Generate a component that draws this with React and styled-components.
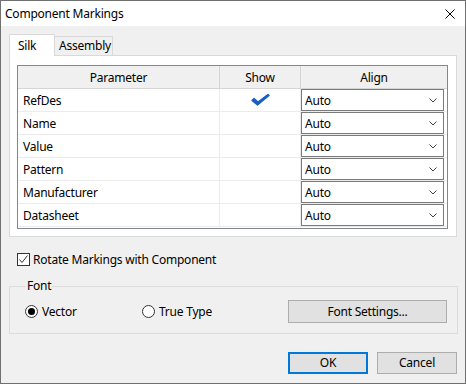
import React from "react";
import styled, { createGlobalStyle } from "styled-components";

const Global = createGlobalStyle`
  html, body { margin: 0; padding: 0; background: #f0f0f0; }
  body { font-family: "Noto Sans", "Liberation Sans", sans-serif; font-size: 12px; letter-spacing: -0.22px; color: #000; }
  * { box-sizing: border-box; }
`;

const Window = styled.div`
  width: 466px;
  height: 384px;
  border: 1px solid #707070;
  background: #f0f0f0;
  display: flex;
  flex-direction: column;
`;

const TitleBar = styled.div`
  height: 25px;
  background: #fff;
  display: flex;
  align-items: center;
  justify-content: space-between;
  padding: 0 10px 0 4px;
`;

const Title = styled.span`
  font-size: 12px;
  line-height: 16px;
`;

const Body = styled.div`
  flex: 1;
  padding: 8px 8px 0 8px;
  display: flex;
  flex-direction: column;
`;

const TabStrip = styled.div`
  display: flex;
  align-items: flex-end;
  height: 21px;
`;

const Tab = styled.div`
  position: relative;
  display: flex;
  align-items: center;
  border: 1px solid #d9d9d9;
  border-bottom: none;
  width: ${(p) => p.$w}px;
  padding-left: ${(p) => p.$pl}px;
  height: ${(p) => (p.$active ? 22 : 19)}px;
  margin-bottom: ${(p) => (p.$active ? -1 : 0)}px;
  margin-left: ${(p) => (p.$active ? 0 : -1)}px;
  background: ${(p) => (p.$active ? "#fff" : "#f0f0f0")};
  z-index: ${(p) => (p.$active ? 2 : 1)};
  line-height: 16px;
`;

const TabPanel = styled.div`
  border: 1px solid #d9d9d9;
  background: #fff;
  padding: 9px 8px 7px 7px;
`;

const Grid = styled.div`
  display: grid;
  grid-template-columns: 202px 81px 146px;
  grid-auto-rows: 23px;
  border: 1px solid #828790;
  padding-bottom: 1px;
  background: #fff;
`;

const HeadCell = styled.div`
  display: flex;
  align-items: center;
  justify-content: center;
  background: #f0f0f0;
  border-bottom: 1px solid #d5d5d5;
  border-right: ${(p) => (p.$last ? "none" : "1px solid #d5d5d5")};
  padding-top: 1px;
`;

const Cell = styled.div`
  display: flex;
  align-items: center;
  justify-content: ${(p) => (p.$center ? "center" : "flex-start")};
  padding-left: ${(p) => (p.$center ? 0 : 5)}px;
  border-bottom: 1px solid #ececec;
  border-right: 1px solid #ececec;
`;

const ComboCell = styled.div`
  display: flex;
  padding-right: 3px;
  border-bottom: 1px solid #ececec;
`;

const Combo = styled.div`
  flex: 1;
  height: 22px;
  border: 1px solid #7a7a7a;
  background: #fff;
  display: flex;
  align-items: center;
  justify-content: space-between;
  padding: 0 6px 0 3px;
`;

const CheckRow = styled.label`
  margin-top: 16px;
  margin-left: 8px;
  display: flex;
  align-items: center;
  gap: 3px;
  height: 13px;
  line-height: 16px;
`;

const Box = styled.span`
  width: 13px;
  height: 13px;
  border: 1px solid #333;
  background: #fff;
  display: flex;
  align-items: center;
  justify-content: center;
`;

const Group = styled.fieldset`
  margin: 12px -1px 0 0;
  padding: 6px 10px 10px 15px;
  border: 1px solid #dcdcdc;
  display: flex;
  align-items: center;
  min-width: 0;
`;

const Legend = styled.legend`
  padding: 0 1px;
  margin-left: 1px;
  line-height: 16px;
  font-size: 12px;
`;

const RadioOption = styled.label`
  display: flex;
  align-items: center;
  gap: 4px;
  width: ${(p) => p.$w}px;
  line-height: 16px;
`;

const RadioCircle = styled.span`
  width: 13px;
  height: 13px;
  border-radius: 50%;
  border: 1px solid #333;
  background: #fff;
  display: flex;
  align-items: center;
  justify-content: center;
  &::after {
    content: "";
    width: 7px;
    height: 7px;
    border-radius: 50%;
    background: ${(p) => (p.$on ? "#000" : "transparent")};
  }
`;

const Button = styled.button`
  font: inherit;
  letter-spacing: inherit;
  color: #000;
  width: ${(p) => p.$w}px;
  height: ${(p) => p.$h || 22}px;
  margin-left: ${(p) => (p.$auto ? "auto" : "0")};
  background: #e1e1e1;
  border: ${(p) => (p.$primary ? "2px solid #0078d7" : "1px solid #adadad")};
  padding: 0;
  line-height: 16px;
`;

const Footer = styled.div`
  margin-top: 18px;
  display: flex;
  justify-content: flex-end;
  gap: 9px;
`;

const Chevron = () => (
  <svg width="8" height="5" viewBox="0 0 8 5">
    <polyline points="0.5,0.5 4,4 7.5,0.5" fill="none" stroke="#444" strokeWidth="1" />
  </svg>
);

const BlueCheck = () => (
  <svg width="19" height="13" viewBox="0 0 19 13">
    <path d="M1 6.5 L6.5 11 L18 1.5 L17 0.5 L7 8 L3 4.5 Z" fill="#1b5fc4" stroke="#1b5fc4" strokeWidth="1.4" strokeLinejoin="round" />
  </svg>
);

const rows = ["RefDes", "Name", "Value", "Pattern", "Manufacturer", "Datasheet"];

export default function App() {
  return (
    <>
      <Global />
      <Window>
        <TitleBar>
          <Title>Component Markings</Title>
          <svg width="10" height="10" viewBox="0 0 10 10">
            <path d="M0.5 0.5 L9.5 9.5 M9.5 0.5 L0.5 9.5" stroke="#000" strokeWidth="1" />
          </svg>
        </TitleBar>
        <Body>
          <TabStrip>
            <Tab $active $w={46} $pl={8}>Silk</Tab>
            <Tab $w={59} $pl={4}>Assembly</Tab>
          </TabStrip>
          <TabPanel>
            <Grid>
              <HeadCell>Parameter</HeadCell>
              <HeadCell>Show</HeadCell>
              <HeadCell $last>Align</HeadCell>
              {rows.map((r, i) => (
                <React.Fragment key={r}>
                  <Cell>{r}</Cell>
                  <Cell $center>{i === 0 ? <BlueCheck /> : null}</Cell>
                  <ComboCell>
                    <Combo>
                      <span>Auto</span>
                      <Chevron />
                    </Combo>
                  </ComboCell>
                </React.Fragment>
              ))}
            </Grid>
          </TabPanel>
          <CheckRow>
            <Box>
              <svg width="11" height="11" viewBox="0 0 11 11">
                <polyline points="1.5,5.5 4,8.5 9.5,1.5" fill="none" stroke="#333" strokeWidth="1" />
              </svg>
            </Box>
            Rotate Markings with Component
          </CheckRow>
          <Group>
            <Legend>Font</Legend>
            <RadioOption $w={117}>
              <RadioCircle $on />
              Vector
            </RadioOption>
            <RadioOption $w={100}>
              <RadioCircle />
              True Type
            </RadioOption>
            <Button $w={159} $h={23} $auto>Font Settings...</Button>
          </Group>
          <Footer>
            <Button $w={80} $primary>OK</Button>
            <Button $w={80}>Cancel</Button>
          </Footer>
        </Body>
      </Window>
    </>
  );
}
